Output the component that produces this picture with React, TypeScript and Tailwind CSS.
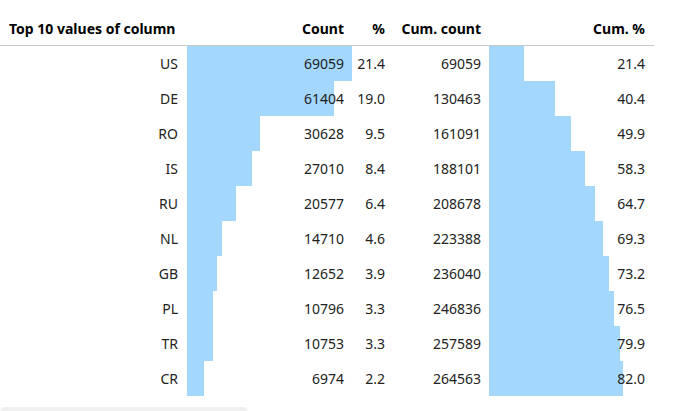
import React from "react";

const rows: [string, number, string, number, string][] = [
  ["US", 69059, "21.4", 69059, "21.4"],
  ["DE", 61404, "19.0", 130463, "40.4"],
  ["RO", 30628, "9.5", 161091, "49.9"],
  ["IS", 27010, "8.4", 188101, "58.3"],
  ["RU", 20577, "6.4", 208678, "64.7"],
  ["NL", 14710, "4.6", 223388, "69.3"],
  ["GB", 12652, "3.9", 236040, "73.2"],
  ["PL", 10796, "3.3", 246836, "76.5"],
  ["TR", 10753, "3.3", 257589, "79.9"],
  ["CR", 6974, "2.2", 264563, "82.0"],
];

const BAR = "#a3d7fb";

function bar(px: number): React.CSSProperties {
  return {
    backgroundImage: `linear-gradient(to right, ${BAR} ${px}px, transparent ${px}px)`,
  };
}

export default function App() {
  const max = 69059;
  return (
    <div
      className="w-[680px] h-[411px] bg-white overflow-hidden text-[14px] text-[#222]"
      style={{ fontFamily: '"Noto Sans", "Open Sans", sans-serif' }}
    >
      <div className="w-[654px]">
        <div className="flex h-[46px] items-end pb-[6px] border-b border-[#c8c8c8] font-bold text-black">
          <div className="w-[187px] pl-[9px] text-left">Top 10 values of column</div>
          <div className="w-[165px] pr-[8px] text-right">Count</div>
          <div className="w-[41px] pr-[8px] text-right">%</div>
          <div className="w-[96px] pr-[8px] text-right">Cum. count</div>
          <div className="w-[164px] pr-[8px] text-right">Cum. %</div>
        </div>
        {rows.map(([k, c, p, cc, cp]) => (
          <div key={k} className="flex h-[35px] items-center">
            <div className="w-[187px] pr-[9px] text-right">{k}</div>
            <div
              className="w-[165px] h-full flex items-center justify-end pr-[8px]"
              style={bar((c / max) * 165)}
            >
              {c}
            </div>
            <div className="w-[41px] pr-[8px] text-right">{p}</div>
            <div className="w-[96px] pr-[8px] text-right">{cc}</div>
            <div
              className="w-[164px] h-full flex items-center justify-end pr-[8px]"
              style={bar((parseFloat(cp) / 100) * 164)}
            >
              {cp}
            </div>
          </div>
        ))}
      </div>
      <div className="mt-[11px] w-[248px] h-[10px] rounded-[5px] bg-[#f0f0f0]" />
    </div>
  );
}
